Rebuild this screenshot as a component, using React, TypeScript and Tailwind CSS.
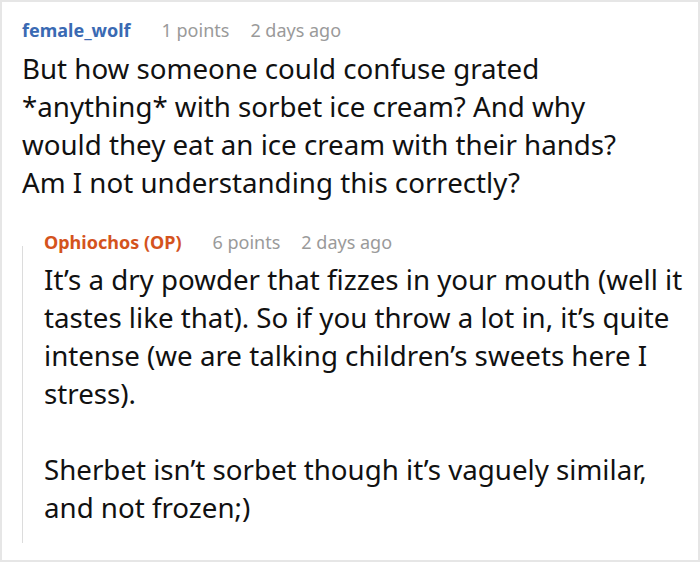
import React from 'react';

const font = { fontFamily: '"Noto Sans", "Open Sans", sans-serif' };

function Meta({ name, nameClass, points }: { name: string; nameClass: string; points: string }) {
  return (
    <div className="flex items-center text-[18px] leading-[24px]">
      <span className={`font-bold ${nameClass} mr-[31px]`}>{name}</span>
      <span className="text-[#9a9a9a] mr-[21px]">{points}</span>
      <span className="text-[#9a9a9a]">2 days ago</span>
    </div>
  );
}

export default function App() {
  return (
    <div style={font} className="w-[700px] h-[562px] bg-white border-2 border-[#e6e6e6] overflow-hidden">
      <div className="pl-[20px] pt-[16px]">
        <Meta name="female_wolf" nameClass="text-[#3a6ab3]" points="1 points" />
        <p className="mt-[7px] text-[27.7px] leading-[38px] text-[#111] whitespace-nowrap">
          But how someone could confuse grated
          <br />
          *anything* with sorbet ice cream? And why
          <br />
          would they eat an ice cream with their hands?
          <br />
          Am I not understanding this correctly?
        </p>

        <div className="mt-[29px]">
          <div className="pl-[22px]">
            <Meta name="Ophiochos (OP)" nameClass="text-[#d4531d]" points="6 points" />
          </div>
          <div className="-mt-[8px] border-l border-[#dcdcdc] pl-[21px] pb-[17px]">
            <div className="pt-[14px] text-[27.7px] leading-[38px] text-[#111] whitespace-nowrap">
              <p>
                It’s a dry powder that fizzes in your mouth (well it
                <br />
                tastes like that). So if you throw a lot in, it’s quite
                <br />
                intense (we are talking children’s sweets here I
                <br />
                stress).
              </p>
              <p className="mt-[38px]">
                Sherbet isn’t sorbet though it’s vaguely similar,
                <br />
                and not frozen;)
              </p>
            </div>
          </div>
        </div>
      </div>
    </div>
  );
}
